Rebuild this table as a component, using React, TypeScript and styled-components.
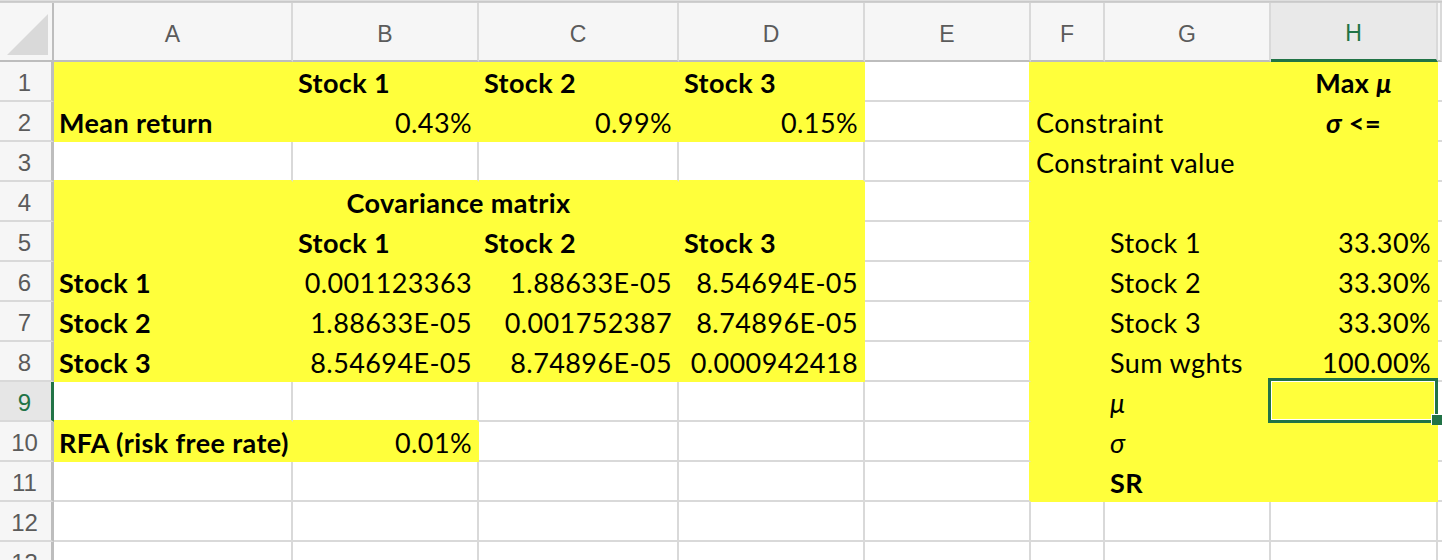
import React from "react";
import styled, { createGlobalStyle } from "styled-components";

const YELLOW = "#ffff3b";
const GRID = "#d9d9d9";
const HEAD_LINE = "#bdbdbd";
const GREEN = "#217346";

const GlobalStyle = createGlobalStyle`
  html, body { margin: 0; padding: 0; background: #ffffff; }
  body { width: 1442px; height: 560px; overflow: hidden; }
`;

const Sheet = styled.div`
  width: 1442px;
  height: 560px;
  overflow: hidden;
  display: flex;
  flex-direction: column;
  background: #ffffff;
`;

const TopEdge = styled.div`
  flex: none;
  height: 3px;
  box-sizing: border-box;
  background: #c9c9c9;
  border-top: 1px solid #dedede;
  border-bottom: 1px solid #cfcfcf;
`;

const Grid = styled.div`
  flex: none;
  display: grid;
  grid-template-columns: 54px 239px 186px 200px 186px 166px 74px 166px 167px 4px;
  grid-template-rows: 59px repeat(13, 40px);
`;

const Corner = styled.div`
  box-sizing: border-box;
  background: #f6f6f6;
  border-right: 2px solid ${HEAD_LINE};
  border-bottom: 2px solid ${HEAD_LINE};
  display: flex;
  align-items: flex-end;
  justify-content: flex-end;
  padding: 0 4px 5px 0;
`;

const CornerTriangle = styled.div`
  width: 41px;
  height: 41px;
  background: #d9d9d9;
  clip-path: polygon(100% 0, 100% 100%, 0 100%);
`;

const ColHead = styled.div<{ $sel?: boolean }>`
  box-sizing: border-box;
  background: ${(p) => (p.$sel ? "#e9e9e9" : "#f6f6f6")};
  border-right: 2px solid ${GRID};
  border-bottom: ${(p) => (p.$sel ? `3px solid ${GREEN}` : `2px solid ${HEAD_LINE}`)};
  display: flex;
  align-items: center;
  justify-content: center;
  padding-top: 5px;
  font-family: "Liberation Sans", Arial, sans-serif;
  font-size: 23px;
  color: ${(p) => (p.$sel ? GREEN : "#5b5b5b")};
  overflow: hidden;
`;

const RowHead = styled.div<{ $sel?: boolean }>`
  box-sizing: border-box;
  background: ${(p) => (p.$sel ? "#e6e6e6" : "#f6f6f6")};
  border-right: 3px solid ${(p) => (p.$sel ? GREEN : HEAD_LINE)};
  border-bottom: 2px solid ${GRID};
  display: flex;
  align-items: center;
  justify-content: center;
  padding: 3px 2px 0 0;
  font-family: "Liberation Sans", Arial, sans-serif;
  font-size: 24px;
  color: ${(p) => (p.$sel ? GREEN : "#5b5b5b")};
`;

const Cell = styled.div<{
  $fill?: boolean;
  $rb: string;
  $bb: string;
  $bold?: boolean;
  $italic?: boolean;
  $align?: "l" | "r" | "c";
  $span?: number;
  $sel?: boolean;
}>`
  box-sizing: border-box;
  position: ${(p) => (p.$sel ? "relative" : "static")};
  grid-column: span ${(p) => p.$span ?? 1};
  background: ${(p) => (p.$fill ? YELLOW : "#ffffff")};
  border-right: 2px solid ${(p) => p.$rb};
  border-bottom: 2px solid ${(p) => p.$bb};
  display: flex;
  align-items: center;
  justify-content: ${(p) =>
    p.$align === "r" ? "flex-end" : p.$align === "c" ? "center" : "flex-start"};
  padding: 2px 5px 0 5px;
  font-family: Lato, "Carlito", "Noto Sans", sans-serif;
  font-size: 27px;
  letter-spacing: 0.4px;
  font-weight: ${(p) => (p.$bold ? 700 : 400)};
  font-style: ${(p) => (p.$italic ? "italic" : "normal")};
  color: #000000;
  white-space: nowrap;
`;

const CellText = styled.span`
  white-space: pre;
`;

const Greek = styled.span`
  font-style: italic;
`;

const Selection = styled.div`
  position: absolute;
  left: -3px;
  top: -4px;
  width: 170px;
  height: 45px;
  box-sizing: border-box;
  border: 3px solid ${GREEN};
  box-shadow: inset 0 0 0 1px #ffffff;
  pointer-events: none;
  z-index: 2;
`;

const FillHandle = styled.div`
  position: absolute;
  left: 160px;
  top: 32px;
  width: 11px;
  height: 11px;
  box-sizing: border-box;
  background: ${GREEN};
  border-left: 1px solid #ffffff;
  border-top: 1px solid #ffffff;
  z-index: 3;
`;

type Def = {
  t?: React.ReactNode;
  f?: boolean;
  b?: boolean;
  i?: boolean;
  a?: "l" | "r" | "c";
  s?: number;
  sel?: boolean;
};

const E: Def = {};
const Y: Def = { f: true };
const yb = (t: string): Def => ({ t, f: true, b: true });
const yr = (t: string): Def => ({ t, f: true, a: "r" });
const yl = (t: string): Def => ({ t, f: true });

const COLS = ["A", "B", "C", "D", "E", "F", "G", "H", ""];

const ROWS: Def[][] = [
  [Y, yb("Stock 1"), yb("Stock 2"), yb("Stock 3"), E, Y, Y,
    { t: <>Max <Greek>μ</Greek></>, f: true, b: true, a: "c" }, E],
  [yb("Mean return"), yr("0.43%"), yr("0.99%"), yr("0.15%"), E,
    { t: "Constraint", f: true, s: 2 },
    { t: <><Greek>σ</Greek> &lt;=</>, f: true, b: true, a: "c" }, E],
  [E, E, E, E, E, { t: "Constraint value", f: true, s: 2 }, Y, E],
  [{ t: "Covariance matrix", f: true, b: true, a: "c", s: 4 }, E, Y, Y, Y, E],
  [Y, yb("Stock 1"), yb("Stock 2"), yb("Stock 3"), E, Y, yl("Stock 1"), yr("33.30%"), E],
  [yb("Stock 1"), yr("0.001123363"), yr("1.88633E-05"), yr("8.54694E-05"), E, Y, yl("Stock 2"), yr("33.30%"), E],
  [yb("Stock 2"), yr("1.88633E-05"), yr("0.001752387"), yr("8.74896E-05"), E, Y, yl("Stock 3"), yr("33.30%"), E],
  [yb("Stock 3"), yr("8.54694E-05"), yr("8.74896E-05"), yr("0.000942418"), E, Y, yl("Sum wghts"), yr("100.00%"), E],
  [E, E, E, E, E, Y, { t: "μ", f: true, i: true }, { f: true, sel: true }, E],
  [yb("RFA (risk free rate)"), yr("0.01%"), E, E, E, Y, { t: "σ", f: true, i: true }, Y, E],
  [E, E, E, E, E, Y, yb("SR"), Y, E],
  [E, E, E, E, E, E, E, E, E],
  [E, E, E, E, E, E, E, E, E],
];

const NCOL = 9;

const fillMap: boolean[][] = ROWS.map((row) => {
  const m: boolean[] = [];
  row.forEach((c) => {
    for (let k = 0; k < (c.s ?? 1); k++) m.push(!!c.f);
  });
  while (m.length < NCOL) m.push(false);
  return m;
});

const isFilled = (r: number, c: number) =>
  r >= 0 && r < fillMap.length && c >= 0 && c < NCOL ? fillMap[r][c] : false;

export default function App() {
  return (
    <Sheet>
      <GlobalStyle />
      <TopEdge />
      <Grid>
        <Corner>
          <CornerTriangle />
        </Corner>
        {COLS.map((c, i) => (
          <ColHead key={`h${i}`} $sel={c === "H"}>
            {c}
          </ColHead>
        ))}
        {ROWS.map((row, r) => {
          let col = 0;
          const cells = row.map((d, j) => {
            const span = d.s ?? 1;
            const start = col;
            const end = col + span - 1;
            col += span;
            const rb = isFilled(r, end) || isFilled(r, end + 1) ? YELLOW : GRID;
            const bb = isFilled(r, start) || isFilled(r + 1, start) ? YELLOW : GRID;
            return (
              <Cell
                key={`c${r}-${j}`}
                $fill={d.f}
                $rb={rb}
                $bb={bb}
                $bold={d.b}
                $italic={d.i}
                $align={d.a}
                $span={span}
                $sel={d.sel}
              >
                {d.t !== undefined && <CellText>{d.t}</CellText>}
                {d.sel && (
                  <>
                    <Selection />
                    <FillHandle />
                  </>
                )}
              </Cell>
            );
          });
          return (
            <React.Fragment key={`r${r}`}>
              <RowHead $sel={r === 8}>{r + 1}</RowHead>
              {cells}
            </React.Fragment>
          );
        })}
      </Grid>
    </Sheet>
  );
}
